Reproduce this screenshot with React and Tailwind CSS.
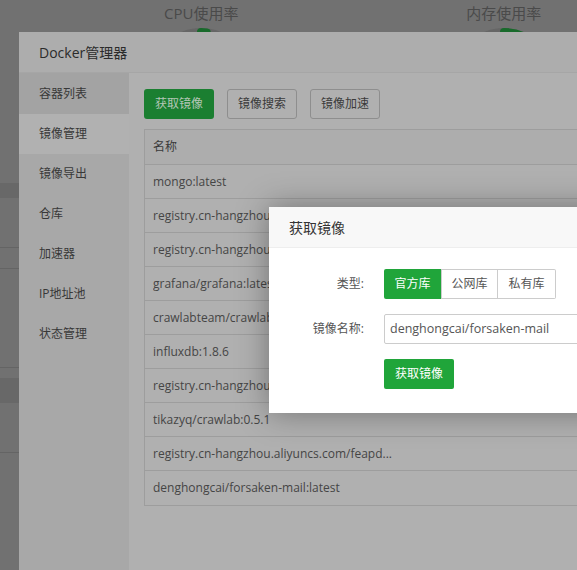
import React from 'react';

const FONT = "font-['Open_Sans','Noto_Sans_CJK_SC',sans-serif]";

const MENU = ['容器列表', '镜像管理', '镜像导出', '仓库', '加速器', 'IP地址池', '状态管理'];

const IMAGES = [
  'mongo:latest',
  'registry.cn-hangzhou.aliyuncs.com/crawlab/crawlab:latest',
  'registry.cn-hangzhou.aliyuncs.com/crawlab/mongo:latest',
  'grafana/grafana:latest',
  'crawlabteam/crawlab:latest',
  'influxdb:1.8.6',
  'registry.cn-hangzhou.aliyuncs.com/feapder/feapder:latest',
  'tikazyq/crawlab:0.5.1',
  'registry.cn-hangzhou.aliyuncs.com/feapd...',
  'denghongcai/forsaken-mail:latest',
];

// 背景页面上的仪表盘（大部分被弹窗挡住）
const Gauge = ({ percent }) => {
  const r = 46;
  const c = 2 * Math.PI * r;
  return (
    <svg width="104" height="104" viewBox="0 0 104 104" className="mt-[3px]">
      <circle cx="52" cy="52" r={r} fill="none" stroke="#666666" strokeWidth="8" />
      <circle
        cx="52"
        cy="52"
        r={r}
        fill="none"
        stroke="#186a2b"
        strokeWidth="8"
        strokeLinecap="round"
        strokeDasharray={`${(c * percent) / 100} ${c}`}
        transform="rotate(-90 52 52)"
      />
    </svg>
  );
};

const BackgroundPage = () => (
  <div className="w-full h-full bg-[#717171]">
    <div className="h-[183px] flex pl-[128px] gap-[156px]">
      <div className="w-[150px] flex flex-col items-center pt-[3px]">
        <div className="text-[15px] leading-[20px] text-[#4a4a4a]">CPU使用率</div>
        <Gauge percent={2} />
      </div>
      <div className="w-[150px] flex flex-col items-center pt-[3px]">
        <div className="text-[15px] leading-[20px] text-[#4a4a4a]">内存使用率</div>
        <Gauge percent={12} />
      </div>
    </div>
    <div className="h-[15px] bg-[#686868]" />
    <div className="h-[50px] border-b border-[#646464]" />
    <div className="h-[21px] border-b border-[#646464]" />
    <div className="h-[99px] border-b border-[#646464]" />
    <div className="h-[10px]" />
    <div className="h-[25px] bg-[#686868]" />
    <div className="h-[50px] border-b border-[#646464]" />
  </div>
);

const DockerDialog = () => (
  <div className="absolute left-[19px] top-[32px] w-[620px] h-[560px] bg-[#b0b0b0] flex flex-col">
    <div className="h-[41px] shrink-0 bg-[#adadad] border-b border-[#a6a6a6] pl-[20px] flex items-center text-[14px] text-[#2b2b2b]">
      Docker管理器
    </div>
    <div className="flex flex-1">
      <div className="w-[110px] shrink-0 bg-[#a8a8a8]">
        {MENU.map((item, i) => (
          <div
            key={item}
            className={`pl-[20px] flex items-center text-[12px] text-[#383838] ${
              i === 0 ? 'h-[41px] bg-[#a3a3a3]' : 'h-[40px]'
            } ${i === 1 ? 'bg-[#b1b1b1]' : ''}`}
          >
            {item}
          </div>
        ))}
      </div>
      <div className="flex-1 pl-[15px] pt-[16px]">
        <div className="flex gap-[13px]">
          <button className="w-[70px] h-[30px] rounded-[3px] bg-[#1b7f31] text-[12px] text-[#b3c6b6]">
            获取镜像
          </button>
          <button className="w-[70px] h-[30px] rounded-[3px] border border-[#8e8e8e] text-[12px] text-[#3a3a3a]">
            镜像搜索
          </button>
          <button className="w-[70px] h-[30px] rounded-[3px] border border-[#8e8e8e] text-[12px] text-[#3a3a3a]">
            镜像加速
          </button>
        </div>
        <div className="mt-[10px] w-[460px] border border-[#9d9d9d]">
          <div className="h-[35px] border-b border-[#9d9d9d] bg-[#adadad] pl-[8px] flex items-center text-[12px] text-[#3a3a3a]">
            名称
          </div>
          {IMAGES.map((name, i) => (
            <div
              key={i}
              className="h-[34px] border-b border-[#9d9d9d] last:border-b-0 pl-[8px] flex items-center text-[12px] text-[#454545] whitespace-nowrap overflow-hidden"
            >
              <span className="w-[245px] overflow-hidden text-clip">{name}</span>
            </div>
          ))}
        </div>
      </div>
    </div>
  </div>
);

const PullModal = () => (
  <div className="absolute left-[269px] top-[207px] w-[400px] h-[206px] bg-white shadow-[0_0_30px_rgba(0,0,0,0.35)]">
    <div className="h-[41px] bg-[#f8f8f8] border-b border-[#eeeeee] pl-[20px] flex items-center text-[14px] text-[#333333]">
      获取镜像
    </div>
    <div className="pt-[21px]">
      <div className="flex items-center h-[30px]">
        <div className="w-[95px] shrink-0 text-right text-[12px] text-[#555555]">类型:</div>
        <div className="ml-[20px] flex text-[12px]">
          <div className="w-[57px] h-[30px] flex items-center justify-center bg-[#20a53a] text-white rounded-l-[2px]">
            官方库
          </div>
          <div className="w-[57px] h-[30px] flex items-center justify-center border border-[#cccccc] text-[#555555]">
            公网库
          </div>
          <div className="w-[58px] h-[30px] flex items-center justify-center border border-l-0 border-[#cccccc] text-[#555555] rounded-r-[2px]">
            私有库
          </div>
        </div>
      </div>
      <div className="flex items-center h-[30px] mt-[15px]">
        <div className="w-[95px] shrink-0 text-right text-[12px] text-[#555555]">镜像名称:</div>
        <div className="ml-[20px] w-[260px] shrink-0 h-[30px] border border-[#cccccc] rounded-[2px] pl-[5px] flex items-center text-[12.5px] text-[#555555]">
          denghongcai/forsaken-mail
        </div>
      </div>
      <div className="flex mt-[15px]">
        <div className="w-[95px] shrink-0" />
        <button className="ml-[20px] w-[70px] h-[30px] rounded-[2px] bg-[#20a53a] text-white text-[12px]">
          获取镜像
        </button>
      </div>
    </div>
  </div>
);

export default function App() {
  return (
    <div className={`relative w-full h-[570px] overflow-hidden ${FONT}`}>
      <BackgroundPage />
      <DockerDialog />
      <PullModal />
    </div>
  );
}
